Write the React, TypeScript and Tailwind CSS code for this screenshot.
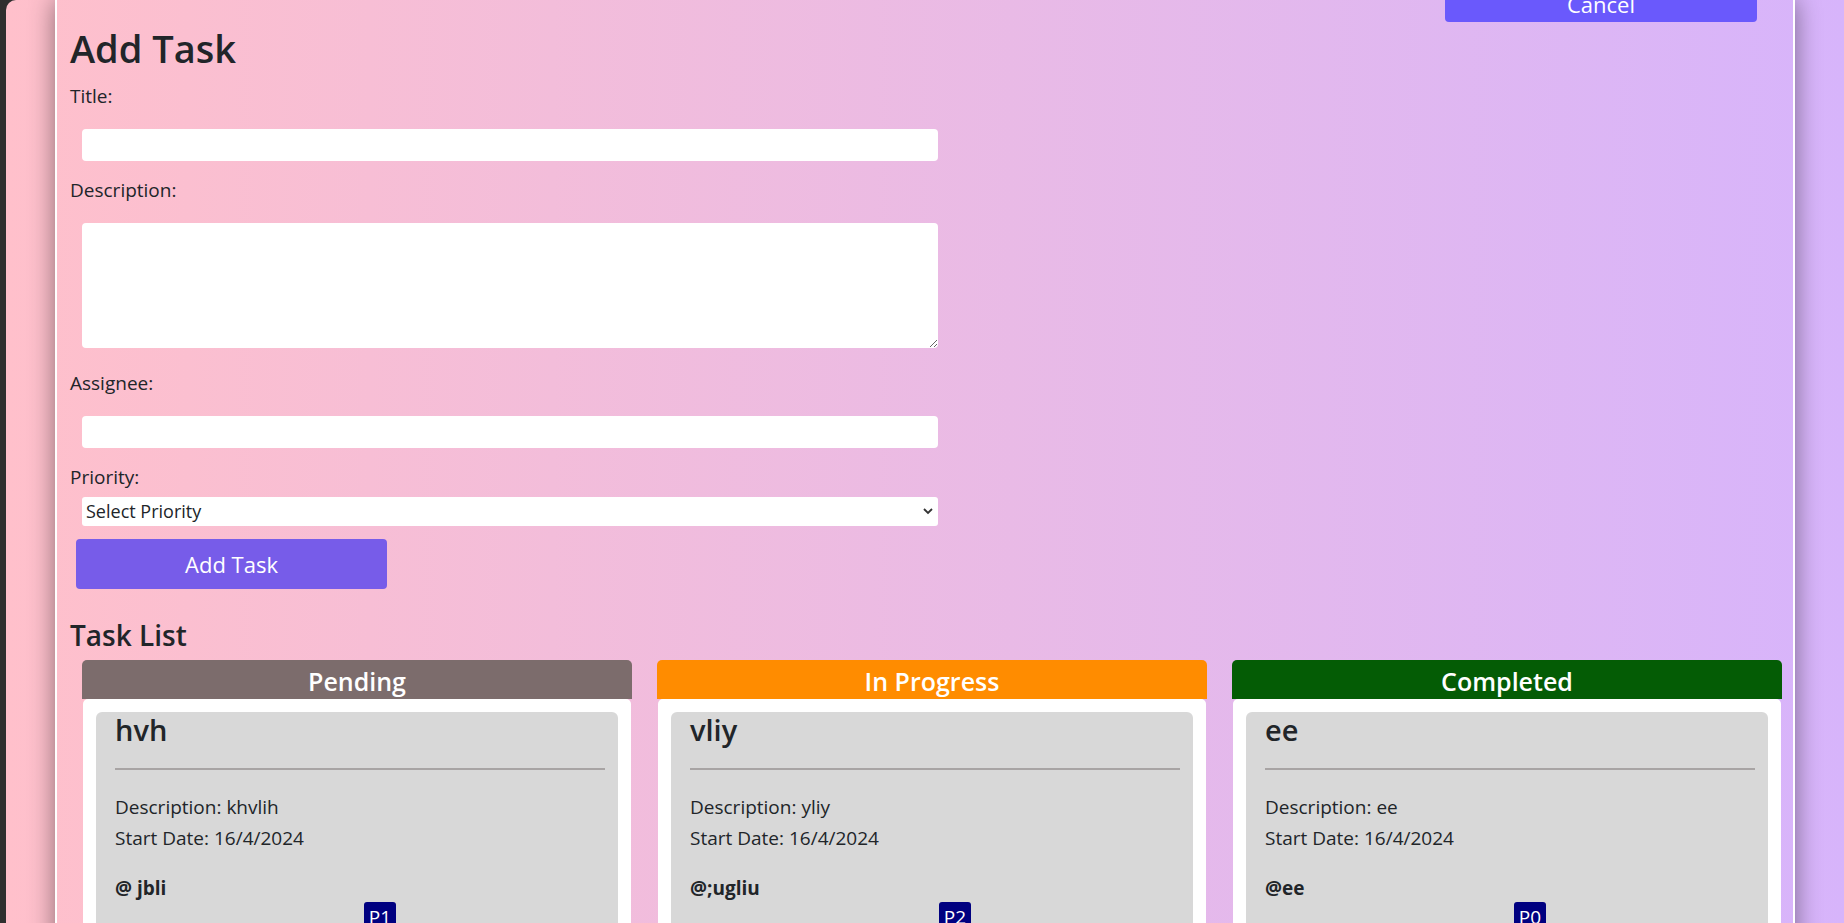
import React from "react";

type Task = {
  status: string;
  color: string;
  title: string;
  desc: string;
  date: string;
  assignee: string;
  priority: string;
};

const tasks: Task[] = [
  { status: "Pending", color: "bg-[#7c6c6c]", title: "hvh", desc: "khvlih", date: "16/4/2024", assignee: "@ jbli", priority: "P1" },
  { status: "In Progress", color: "bg-[#ff8c00]", title: "vliy", desc: "yliy", date: "16/4/2024", assignee: "@;ugliu", priority: "P2" },
  { status: "Completed", color: "bg-[#045c05]", title: "ee", desc: "ee", date: "16/4/2024", assignee: "@ee", priority: "P0" },
];

function Column({ t }: { t: Task }) {
  return (
    <div className="flex flex-col">
      <div className={`h-[39px] rounded-t-[5px] ${t.color} pt-[4px] text-center text-[25px] font-semibold leading-[35px] text-white`}>
        {t.status}
      </div>
      <div className="mx-[1px] rounded-t-[5px] bg-white px-[13px] pt-[13px] pb-[20px]">
        <div className="rounded-[6px] bg-[#d8d8d8] pl-[19px] pr-[13px] pb-[20px]">
          <div className="text-[29px] font-semibold leading-[36px]">{t.title}</div>
          <div className="mt-[20px] h-[2px] bg-[#a8a4a4]" />
          <div className="mt-[22px] text-[19px] leading-[31px]">Description: {t.desc}</div>
          <div className="text-[19px] leading-[31px]">Start Date: {t.date}</div>
          <div className="mt-[21px] text-[19px] font-bold leading-[27px]">{t.assignee}</div>
          <div className="ml-[249px] h-[30px] w-[32px] rounded-t-[3px] bg-[#000080] text-center text-[19px] leading-[30px] text-white">
            {t.priority}
          </div>
        </div>
      </div>
    </div>
  );
}

export default function App() {
  return (
    <div className="h-[923px] w-full overflow-hidden bg-[#2f2f2f] pl-[6px] font-['Open_Sans',sans-serif] text-[#212529]">
      <div className="h-full overflow-hidden rounded-tl-[10px] bg-linear-to-r from-[#ffc0cb] to-[#d7b4fb] pl-[49px]">
        <div className="min-h-[1000px] w-[1740px] border-x-2 border-white pl-[13px] shadow-[0_0_24px_rgba(0,0,0,0.45)]">
          <div className="flex justify-end pr-[36px]">
            <button className="-mt-[14px] h-[36px] w-[312px] rounded-[4px] bg-[#6a59fc] text-[22px] leading-[36px] text-white">
              Cancel
            </button>
          </div>

          <h1 className="mt-[2px] text-[38px] font-semibold leading-[48px]">Add Task</h1>

          <div className="mt-[10px] text-[19px] leading-[28px]">Title:</div>
          <input type="text" className="mt-[19px] ml-[12px] block h-[32px] w-[856px] rounded-[4px] bg-white outline-none" />

          <div className="mt-[15px] text-[19px] leading-[28px]">Description:</div>
          <textarea className="mt-[19px] ml-[12px] block h-[125px] w-[856px] rounded-[4px] bg-white outline-none" />

          <div className="mt-[21px] text-[19px] leading-[28px]">Assignee:</div>
          <input type="text" className="mt-[19px] ml-[12px] block h-[32px] w-[856px] rounded-[4px] bg-white outline-none" />

          <div className="mt-[15px] text-[19px] leading-[28px]">Priority:</div>
          <div className="relative mt-[6px] ml-[12px] h-[29px] w-[856px]">
            <select className="block h-[29px] w-full appearance-none rounded-[3px] bg-white pl-[4px] text-[18px] leading-[29px] text-[#212529] outline-none">
              <option>Select Priority</option>
              <option>P0</option>
              <option>P1</option>
              <option>P2</option>
            </select>
            <svg className="pointer-events-none absolute right-[4px] top-[9px]" width="12" height="10" viewBox="0 0 12 10">
              <path d="M2 3 L6 7 L10 3" fill="none" stroke="#333" strokeWidth="1.8" />
            </svg>
          </div>

          <button className="mt-[13px] ml-[6px] block h-[50px] w-[311px] rounded-[4px] bg-[#775ce9] text-[22px] text-white">
            Add Task
          </button>

          <h2 className="mt-[28px] text-[28px] font-semibold leading-[36px]">Task List</h2>

          <div className="mt-[7px] ml-[12px] grid w-[1700px] grid-cols-3 gap-x-[25px]">
            {tasks.map((t) => (
              <Column key={t.status} t={t} />
            ))}
          </div>
        </div>
      </div>
    </div>
  );
}
